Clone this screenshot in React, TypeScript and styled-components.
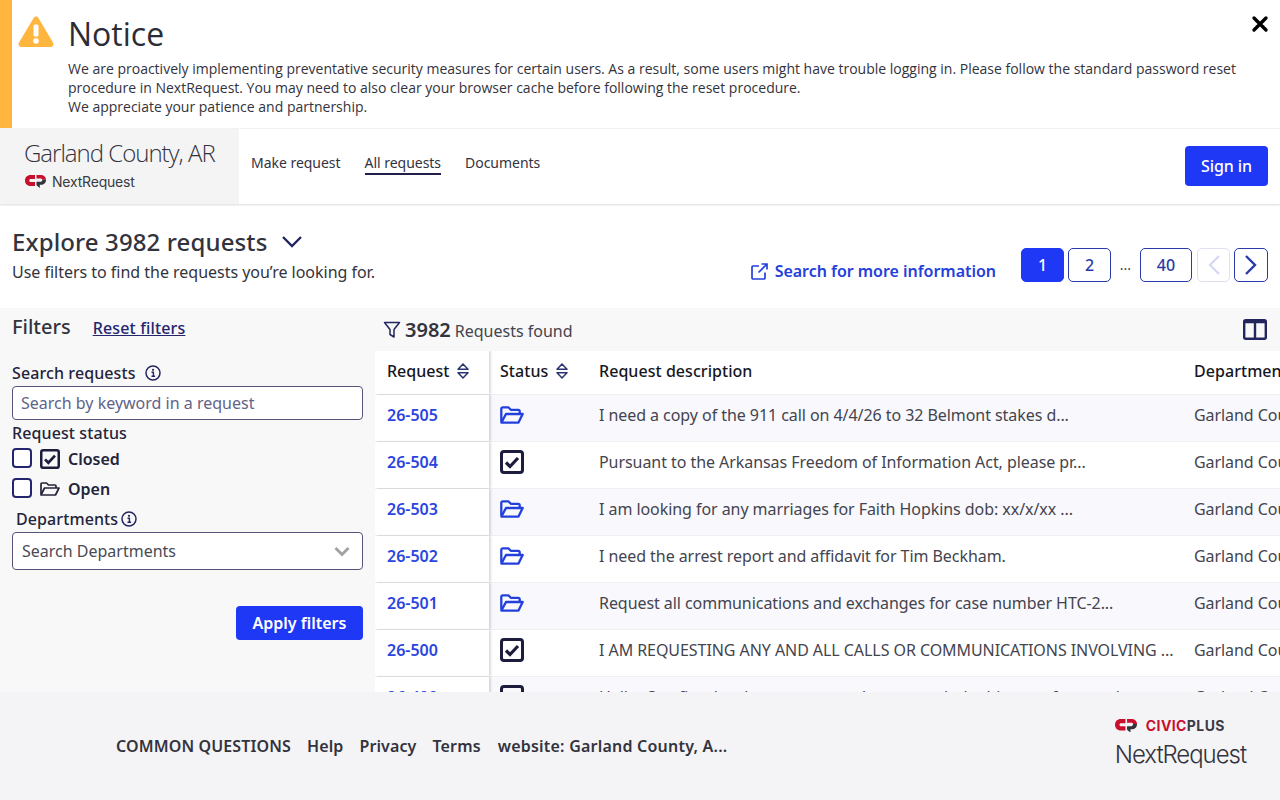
import React from 'react';
import styled, { createGlobalStyle } from 'styled-components';

const Global = createGlobalStyle`
  html, body { margin: 0; padding: 0; height: 800px; overflow: hidden; background: #fff; }
  * { box-sizing: border-box; }
  body { font-family: "Noto Sans", "Open Sans", sans-serif; color: #2f2f38; }
`;

const Page = styled.div`width: 1280px; height: 800px; display: flex; flex-direction: column; overflow: hidden;`;

const Notice = styled.section`
  height: 128px; flex: none; display: flex; border-left: 12px solid #ffb63f; position: relative; background: #fff;
`;
const NoticeIcon = styled.div`width: 56px; flex: none; padding: 15px 0 0 6px;`;
const NoticeBody = styled.div`flex: 1; padding-top: 12px; font-family: "Open Sans", sans-serif;`;
const NoticeTitle = styled.h2`margin: 0 0 3px; font-size: 32px; line-height: 44px; font-weight: 400; color: #2c2c36; `;
const NoticeText = styled.p`margin: 0; width: 1180px; font-size: 14px; line-height: 19px; color: #33333d;`;
const Close = styled.button`
  position: absolute; top: 14px; right: 10px; width: 20px; height: 20px; padding: 0; border: 0; background: none; color: #000;
`;

const Nav = styled.header`
  height: 76px; flex: none; display: flex; background: #fff; box-shadow: 0 1px 2px rgba(0,0,0,.15); border-top: 1px solid #f2f2f2; position: relative; z-index: 2;
`;
const Brand = styled.div`width: 239px; flex: none; background: #f4f4f5; padding: 8px 0 0 24px;`;
const County = styled.div`font-family: "Open Sans", sans-serif; font-size: 24px; font-weight: 300; line-height: 32px; letter-spacing: -1px; color: #33333d;`;
const BrandRow = styled.div`display: flex; align-items: center; gap: 6px; margin: 3px 0 0 1px; font-family: "Inter", sans-serif; font-size: 14px; letter-spacing: -0.2px; line-height: 20px; color: #3a3a42;`;
const Links = styled.nav`flex: 1; display: flex; gap: 24px; padding: 24px 12px 0; align-items: flex-start;`;
const NavLink = styled.a<{ $active?: boolean }>`
  font-size: 14px; line-height: 20px; letter-spacing: -0.03px; color: #33333d; padding-bottom: 0;
  border-bottom: 2px solid ${p => (p.$active ? '#20204a' : 'transparent')};
`;
const SignIn = styled.button`
  align-self: flex-start; margin: 17px 12px 0 0; width: 83px; height: 40px; background: #1f38f5; color: #fff; border: 0; border-radius: 4px;
  font: 500 16px "Noto Sans", sans-serif; letter-spacing: -0.1px;
`;

const Explore = styled.section`height: 104px; flex: none; display: flex; padding: 0 12px; background: #fff;`;
const ExploreLeft = styled.div`flex: 1; padding-top: 21px;`;
const ExploreTitle = styled.h1`margin: 0; display: flex; align-items: center; gap: 14px; font-size: 24px; line-height: 34px; font-weight: 500; letter-spacing: .12px; color: #33333d;`;
const ExploreSub = styled.p`margin: 2px 0 0; font-size: 16px; line-height: 22px; letter-spacing: -0.02px; color: #33333d;`;
const MoreLink = styled.a`
  display: flex; align-items: center; gap: 7px; margin: 56px 25px 0 0; height: 22px; font-size: 16px; font-weight: 600; letter-spacing: -0.03px; color: #2440dc;
`;
const Pager = styled.div`display: flex; align-items: flex-start; gap: 4px; padding-top: 44px;`;
const PageBtn = styled.button<{ $on?: boolean; $off?: boolean; $w: number }>`
  width: ${p => p.$w}px; height: 34px; padding: 0; display: flex; align-items: center; justify-content: center;
  border-radius: 5px; font: 500 16px "Noto Sans", sans-serif;
  background: ${p => (p.$on ? '#1f38f5' : '#fff')};
  color: ${p => (p.$on ? '#fff' : p.$off ? '#cdd2f5' : '#2a3aa8')};
  border: 1px solid ${p => (p.$on ? '#1f38f5' : p.$off ? '#dfe1f2' : '#2a3aa8')};
  margin-left: ${p => (p.$off ? 1 : 0)}px;
`;
const Dots = styled.span`width: 21px; text-align: center; font-size: 14px; line-height: 34px; color: #444;`;

const Main = styled.main`flex: 1; min-height: 0; display: flex; background: #f8f8f9; overflow: hidden;`;
const Side = styled.aside`width: 375px; flex: none; padding: 5px 12px 0;`;
const SideHead = styled.div`display: flex; align-items: baseline; gap: 22px; height: 36px;`;
const SideTitle = styled.h3`margin: 0; font-size: 20px; line-height: 28px; font-weight: 500; color: #33333d;`;
const Reset = styled.a`font-size: 16px; font-weight: 500; letter-spacing: .15px; color: #23266e; text-decoration: underline;`;
const Label = styled.div<{ $inset?: number }>`
  display: flex; align-items: center; gap: 6px; font-size: 16px; line-height: 22px; font-weight: 500; letter-spacing: .1px; color: #24243a;
  padding-left: ${p => p.$inset ?? 0}px;
`;
const SearchLabel = styled(Label)`margin-top: 13px; gap: 9px; height: 22px;`;
const TextInput = styled.div`
  width: 351px; height: 34px; margin-top: 2px; border: 1px solid #55557a; border-radius: 4px; background: #fff;
  padding: 0 8px; font-size: 16px; line-height: 32px; color: #5f6388;
`;
const StatusLabel = styled(Label)`margin-top: 2px;`;
const CheckRow = styled.div`display: flex; align-items: center; height: 30px; font-size: 16px; font-weight: 600; color: #24243a;`;
const Box = styled.span`width: 20px; height: 20px; margin: -2px 8px 0 0; border: 2px solid #23266e; border-radius: 4px; background: #fff; flex: none;`;
const CheckIconWrap = styled.span`width: 20px; height: 20px; margin-right: 8px; display: flex; flex: none;`;
const DeptLabel = styled(Label)`margin-top: 4px; gap: 3px;`;
const Select = styled.div`
  width: 351px; height: 38px; margin-top: 2px; border: 1px solid #55557a; border-radius: 4px; background: #fff;
  padding: 0 12px 0 9px; display: flex; align-items: center; justify-content: space-between; font-size: 16px; color: #4a4a55;
`;
const ApplyRow = styled.div`display: flex; justify-content: flex-end; width: 351px; margin-top: 36px;`;
const Apply = styled.button`
  width: 127px; height: 34px; border: 0; border-radius: 4px; background: #1f38f5; color: #fff; font: 600 16px "Noto Sans", sans-serif;
`;

const Results = styled.div`flex: 1; min-width: 0; display: flex; flex-direction: column;`;
const ResultsHead = styled.div`height: 43px; flex: none; display: flex; align-items: center; padding: 0 13px 0 8px;`;
const Found = styled.div`flex: 1; display: flex; align-items: baseline; font-size: 16px; color: #44444e;`;
const FoundNum = styled.strong`font-size: 20px; font-weight: 600; margin: 0 4px 0 4px; color: #33333d;`;
const FilterIcon = styled.span`align-self: center; display: flex; height: 18px;`;

const Table = styled.div`flex: 1; overflow: hidden; background: #fff;`;
const Row = styled.div<{ $head?: boolean; $tint?: boolean }>`
  display: grid; grid-template-columns: 114px 110px 595px 1fr; height: ${p => (p.$head ? '44px' : '47px')};
  background: ${p => (p.$tint ? '#f8f8fd' : '#fff')};
  border-bottom: 1px solid #f0f0f2;
  font-size: 16px; white-space: nowrap;
`;
const Cell = styled.div<{ $bold?: boolean }>`
  display: flex; align-items: center; overflow: hidden; padding-bottom: ${p => (p.$bold ? 3 : 6)}px;
  font-weight: ${p => (p.$bold ? 500 : 400)}; color: ${p => (p.$bold ? '#17171f' : '#44444e')};
  letter-spacing: ${p => (p.$bold ? '.05px' : '-.06px')};
`;
const StickyCell = styled(Cell)`
  padding-left: 12px; background: #fff; box-shadow: 2px 0 2px rgba(0,0,0,.14); position: relative; z-index: 1; overflow: visible;
  font-weight: ${p => (p.$bold ? 500 : 600)}; color: ${p => (p.$bold ? '#17171f' : '#2a45e0')}; letter-spacing: 0;
`;
const StatusCell = styled(Cell)`padding-left: 11px; letter-spacing: .05px;`;
const SortWrap = styled.span`display: flex; margin-left: 8px;`;

const Footer = styled.footer`
  height: 108px; flex: none; background: #f4f4f6; display: flex; align-items: center; padding: 0 34px 0 116px; position: relative; z-index: 2;
`;
const FootLinks = styled.div`flex: 1; display: flex; gap: 16px; font-size: 16px; font-weight: 600; letter-spacing: .12px; color: #33333d;`;
const FootSite = styled.span`margin-left: 1px; letter-spacing: .22px;`;
const FootLogo = styled.div`display: flex; flex-direction: column; margin-top: -5px;`;
const CivicRow = styled.div`display: flex; align-items: center; gap: 9px; height: 18px; font-family: "Inter", sans-serif; font-size: 14px; font-weight: 700; letter-spacing: .4px;`;
const Civic = styled.span`color: #c8102e;`;
const Plus = styled.span`color: #3a3a45;`;
const FootName = styled.div`font-family: "Inter", sans-serif; font-size: 24px; font-weight: 300; letter-spacing: -1.05px; line-height: 32px; color: #33333d; margin-top: 4px;`;

const Warning = () => (
  <svg width="36" height="33" viewBox="0 0 36 33"><path d="M18 1.5c-1 0-1.8.5-2.4 1.5L1 27.6c-1.2 2.2.2 4.4 2.6 4.4h28.8c2.4 0 3.8-2.2 2.6-4.4L20.400 3c-.6-1-1.400-1.500-2.400-1.500z" fill="#ffb63f"/><rect x="15.500" y="9.500" width="5" height="12" rx="1.500" fill="#fff"/><circle cx="18" cy="26" r="2.800" fill="#fff"/></svg>
);
const CpLogo = ({ w = 21 }: { w?: number }) => (
  <svg width={w} height={w * 0.62} viewBox="0 0 21 13">
    <path d="M5.500 0H10v4H5.500C4.700 4 4.300 4.700 4.300 5.500S4.700 7 5.500 7H10v4H5.500C2.300 11 0 8.700 0 5.500S2.300 0 5.500 0z" fill="#c8102e"/>
    <path d="M11.500 0H16c2.900 0 5 2.200 5 4.800H17.300C17 3.800 16.300 3.500 15.400 3.500h-3.900z" fill="#c8102e"/>
    <path d="M21 4.800C21 8 18.800 9.800 16 9.800h-1.200V13l-3.300-2.800V6.800h3.900c1 0 1.900-.6 1.900-2z" fill="#33333d"/>
  </svg>
);
const Info = () => (
  <svg width="16" height="16" viewBox="0 0 16 16" fill="none"><circle cx="8" cy="8" r="7" stroke="#23265e" strokeWidth="1.500"/><circle cx="8" cy="4.800" r="1.100" fill="#23265e"/><path d="M6.500 7.200H8.400V11M6.500 11.200h3.600" stroke="#23265e" strokeWidth="1.400"/></svg>
);
const Sort = () => (
  <svg width="12" height="16" viewBox="0 0 12 16" fill="none" stroke="#2a3470" strokeWidth="1.500" strokeLinejoin="round"><path d="M1 6.200 6 1l5 5.200zM1 9.800 6 15l5-5.200z"/></svg>
);
const FolderOpen = ({ size = 24, color = '#2440dc', sw = 2.300 }: { size?: number; color?: string; sw?: number }) => (
  <svg width={size} height={size * 0.75} viewBox="0 0 24 18" fill="none" stroke={color} strokeWidth={sw} strokeLinejoin="round"><path d="M1.300 15.500V2.800c0-.8.700-1.500 1.500-1.500h5.500l2.500 2.500h7.400c.8 0 1.500.7 1.500 1.500V8"/><path d="M1.300 16.600 6 8h16.700l-4.200 8.600z"/></svg>
);
const Checked = ({ size = 24 }: { size?: number }) => (
  <svg width={size} height={size} viewBox="0 0 24 24" fill="none"><rect x="1.500" y="1.500" width="21" height="21" rx="2.500" stroke="#1c1c3c" strokeWidth="3"/><path d="M6 12.500l4 4 8-8.500" stroke="#1c1c3c" strokeWidth="3.200"/></svg>
);

const rows = [
  ['26-505', 'open', 'I need a copy of the 911 call on 4/4/26 to 32 Belmont stakes d...'],
  ['26-504', 'closed', 'Pursuant to the Arkansas Freedom of Information Act, please pr...'],
  ['26-503', 'open', 'I am looking for any marriages for Faith Hopkins dob: xx/x/xx ...'],
  ['26-502', 'open', 'I need the arrest report and affidavit for Tim Beckham.'],
  ['26-501', 'open', 'Request all communications and exchanges for case number HTC-2...'],
  ['26-500', 'closed', 'I AM REQUESTING ANY AND ALL CALLS OR COMMUNICATIONS INVOLVING ...'],
  ['26-499', 'closed', 'Hello, Our firm has been contracted to research the history of a parcel...'],
];

export default function App() {
  return (
    <Page>
      <Global />
      <Notice>
        <NoticeIcon><Warning /></NoticeIcon>
        <NoticeBody>
          <NoticeTitle>Notice</NoticeTitle>
          <NoticeText>
            We are proactively implementing preventative security measures for certain users. As a result, some users might have trouble logging in. Please follow the standard password reset procedure in NextRequest. You may need to also clear your browser cache before following the reset procedure.<br />
            We appreciate your patience and partnership.
          </NoticeText>
        </NoticeBody>
        <Close aria-label="Close">
          <svg width="20" height="20" viewBox="0 0 20 20" fill="none" stroke="currentColor" strokeWidth="3.400" strokeLinecap="round"><path d="M4 4l12 12M16 4 4 16" /></svg>
        </Close>
      </Notice>
      <Nav>
        <Brand>
          <County>Garland County, AR</County>
          <BrandRow><CpLogo />NextRequest</BrandRow>
        </Brand>
        <Links>
          <NavLink>Make request</NavLink>
          <NavLink $active>All requests</NavLink>
          <NavLink>Documents</NavLink>
        </Links>
        <SignIn>Sign in</SignIn>
      </Nav>
      <Explore>
        <ExploreLeft>
          <ExploreTitle>
            Explore 3982 requests
            <svg width="22" height="14" viewBox="0 0 22 14" fill="none" stroke="#23265e" strokeWidth="2.400"><path d="M2 2l9 9 9-9" /></svg>
          </ExploreTitle>
          <ExploreSub>Use filters to find the requests you’re looking for.</ExploreSub>
        </ExploreLeft>
        <MoreLink>
          <svg width="17" height="17" viewBox="0 0 17 17" fill="none" stroke="#2440dc" strokeWidth="1.700"><path d="M14 9.500V15a1 1 0 0 1-1 1H2a1 1 0 0 1-1-1V4a1 1 0 0 1 1-1h6M10.500 1H16v5.500M16 1 7.500 9.500" /></svg>
          Search for more information
        </MoreLink>
        <Pager>
          <PageBtn $on $w={43}>1</PageBtn>
          <PageBtn $w={43}>2</PageBtn>
          <Dots>...</Dots>
          <PageBtn $w={52}>40</PageBtn>
          <PageBtn $off $w={33}>
            <svg width="14" height="22" viewBox="0 0 14 22" fill="none" stroke="#d3d7f5" strokeWidth="2"><path d="M12 2 3 11l9 9" /></svg>
          </PageBtn>
          <PageBtn $w={34}>
            <svg width="14" height="22" viewBox="0 0 14 22" fill="none" stroke="#2a3aa8" strokeWidth="2.400"><path d="M2 2l9 9-9 9" /></svg>
          </PageBtn>
        </Pager>
      </Explore>
      <Main>
        <Side>
          <SideHead>
            <SideTitle>Filters</SideTitle>
            <Reset>Reset filters</Reset>
          </SideHead>
          <SearchLabel>Search requests <Info /></SearchLabel>
          <TextInput>Search by keyword in a request</TextInput>
          <StatusLabel>Request status</StatusLabel>
          <CheckRow><Box /><CheckIconWrap><Checked size={20} /></CheckIconWrap>Closed</CheckRow>
          <CheckRow><Box /><CheckIconWrap><svg width="20" height="20" viewBox="0 0 20 20" fill="none" stroke="#24243a" strokeWidth="1.700" strokeLinejoin="round"><path d="M1 15V5c0-.6.4-1 1-1h4.500l2 2H15c.6 0 1 .4 1 1v2" /><path d="M1 16l3.500-7H19l-3.500 7z" /></svg></CheckIconWrap>Open</CheckRow>
          <DeptLabel $inset={4}>Departments <Info /></DeptLabel>
          <Select>
            Search Departments
            <svg width="16" height="11" viewBox="0 0 16 11" fill="none" stroke="#a3a3a3" strokeWidth="3"><path d="M1.500 2 8 8.500 14.500 2" /></svg>
          </Select>
          <ApplyRow><Apply>Apply filters</Apply></ApplyRow>
        </Side>
        <Results>
          <ResultsHead>
            <Found>
              <FilterIcon>
                <svg width="18" height="18" viewBox="0 0 18 18" fill="none" stroke="#23265e" strokeWidth="1.500" strokeLinejoin="round"><path d="M1.500 1.500h15L11 8.500V16l-4-2.500v-5z" /></svg>
              </FilterIcon>
              <FoundNum>3982</FoundNum> Requests found
            </Found>
            <svg width="24" height="21" viewBox="0 0 24 21" fill="none" stroke="#23265e" strokeWidth="2.400"><rect x="1.200" y="1.200" width="21.600" height="18.600" rx="1.500" /><path d="M12 1v19M1 3h22" /></svg>
          </ResultsHead>
          <Table>
            <Row $head>
              <StickyCell $bold>Request<SortWrap><Sort /></SortWrap></StickyCell>
              <StatusCell $bold>Status<SortWrap><Sort /></SortWrap></StatusCell>
              <Cell $bold>Request description</Cell>
              <Cell $bold>Department</Cell>
            </Row>
            {rows.map((r, i) => (
              <Row key={r[0]} $tint={i % 2 === 0}>
                <StickyCell>{r[0]}</StickyCell>
                <StatusCell>{r[1] === 'open' ? <FolderOpen /> : <Checked />}</StatusCell>
                <Cell>{r[2]}</Cell>
                <Cell>Garland County</Cell>
              </Row>
            ))}
          </Table>
        </Results>
      </Main>
      <Footer>
        <FootLinks>
          <span>COMMON QUESTIONS</span>
          <span>Help</span>
          <span>Privacy</span>
          <span>Terms</span>
          <FootSite>website: Garland County, A...</FootSite>
        </FootLinks>
        <FootLogo>
          <CivicRow><CpLogo w={22} /><span><Civic>CIVIC</Civic><Plus>PLUS</Plus></span></CivicRow>
          <FootName>NextRequest</FootName>
        </FootLogo>
      </Footer>
    </Page>
  );
}
